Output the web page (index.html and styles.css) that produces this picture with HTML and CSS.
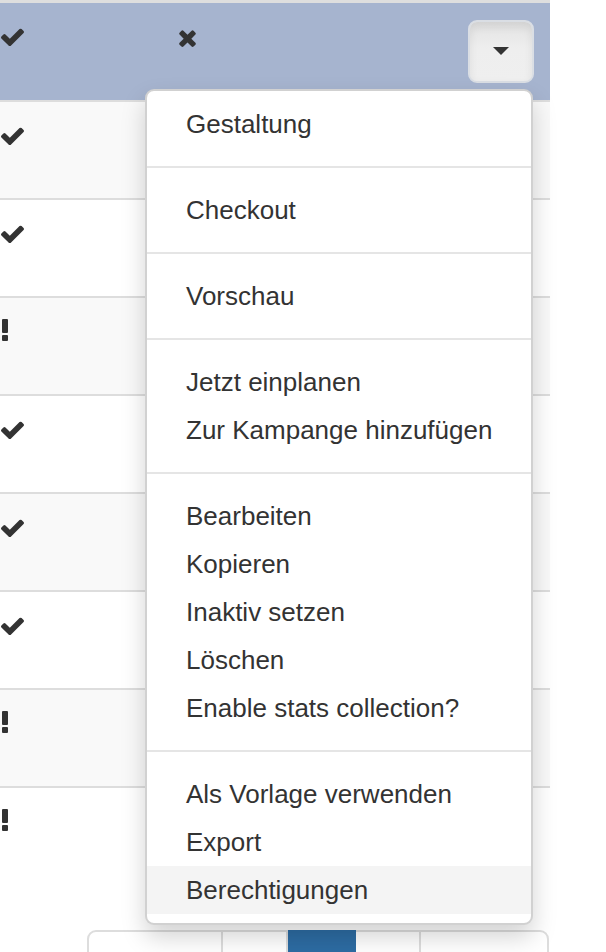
FILE: index.html
```html
<!DOCTYPE html>
<html lang="de">
<head>
<meta charset="utf-8">
<title>Liste</title>
<link rel="stylesheet" href="styles.css">
</head>
<body>
<div class="page">
  <div class="table">
    <div class="row head">
      <div class="cell first">
        <svg class="ic-check" viewBox="121 300 1550 1192"><path d="M1671 566q0 40-28 68l-724 724-136 136q-28 28-68 28t-68-28l-136-136-362-362q-28-28-28-68t28-68l136-136q28-28 68-28t68 28l294 295 656-657q28-28 68-28t68 28l136 136q28 28 28 68z"/></svg>
      </div>
      <div class="cell second">
        <svg class="ic-times" viewBox="110 270 1188 1284"><path d="M1298 1322q0 40-28 68l-136 136q-28 28-68 28t-68-28l-294-294-294 294q-28 28-68 28t-68-28l-136-136q-28-28-28-68t28-68l294-294-294-294q-28-28-28-68t28-68l136-136q28-28 68-28t68 28l294 294 294-294q28-28 68-28t68 28l136 136q28 28 28 68t-28 68l-294 294 294 294q28 28 28 68z"/></svg>
      </div>
      <button class="toggle" type="button"><span class="caret"></span></button>
    </div>
    <div class="row odd"><div class="cell first"><svg class="ic-check" viewBox="121 300 1550 1192"><path d="M1671 566q0 40-28 68l-724 724-136 136q-28 28-68 28t-68-28l-136-136-362-362q-28-28-28-68t28-68l136-136q28-28 68-28t68 28l294 295 656-657q28-28 68-28t68 28l136 136q28 28 28 68z"/></svg></div></div>
    <div class="row"><div class="cell first"><svg class="ic-check" viewBox="121 300 1550 1192"><path d="M1671 566q0 40-28 68l-724 724-136 136q-28 28-68 28t-68-28l-136-136-362-362q-28-28-28-68t28-68l136-136q28-28 68-28t68 28l294 295 656-657q28-28 68-28t68 28l136 136q28 28 28 68z"/></svg></div></div>
    <div class="row odd"><div class="cell first"><svg class="ic-excl" viewBox="0 0 6 22"><rect x="0" y="0" width="6" height="14" rx="1"/><rect x="0" y="16" width="6" height="6" rx="1"/></svg></div></div>
    <div class="row"><div class="cell first"><svg class="ic-check" viewBox="121 300 1550 1192"><path d="M1671 566q0 40-28 68l-724 724-136 136q-28 28-68 28t-68-28l-136-136-362-362q-28-28-28-68t28-68l136-136q28-28 68-28t68 28l294 295 656-657q28-28 68-28t68 28l136 136q28 28 28 68z"/></svg></div></div>
    <div class="row odd"><div class="cell first"><svg class="ic-check" viewBox="121 300 1550 1192"><path d="M1671 566q0 40-28 68l-724 724-136 136q-28 28-68 28t-68-28l-136-136-362-362q-28-28-28-68t28-68l136-136q28-28 68-28t68 28l294 295 656-657q28-28 68-28t68 28l136 136q28 28 28 68z"/></svg></div></div>
    <div class="row"><div class="cell first"><svg class="ic-check" viewBox="121 300 1550 1192"><path d="M1671 566q0 40-28 68l-724 724-136 136q-28 28-68 28t-68-28l-136-136-362-362q-28-28-28-68t28-68l136-136q28-28 68-28t68 28l294 295 656-657q28-28 68-28t68 28l136 136q28 28 28 68z"/></svg></div></div>
    <div class="row odd"><div class="cell first"><svg class="ic-excl" viewBox="0 0 6 22"><rect x="0" y="0" width="6" height="14" rx="1"/><rect x="0" y="16" width="6" height="6" rx="1"/></svg></div></div>
    <div class="row"><div class="cell first"><svg class="ic-excl" viewBox="0 0 6 22"><rect x="0" y="0" width="6" height="14" rx="1"/><rect x="0" y="16" width="6" height="6" rx="1"/></svg></div></div>
  </div>

  <ul class="pagination">
    <li class="pg pg-wide"></li>
    <li class="pg pg-a"></li>
    <li class="pg pg-active"></li>
    <li class="pg pg-b"></li>
    <li class="pg pg-last"></li>
  </ul>

  <ul class="menu">
    <li class="item">Gestaltung</li>
    <li class="divider"></li>
    <li class="item">Checkout</li>
    <li class="divider"></li>
    <li class="item">Vorschau</li>
    <li class="divider"></li>
    <li class="item">Jetzt einplanen</li>
    <li class="item">Zur Kampange hinzufügen</li>
    <li class="divider"></li>
    <li class="item">Bearbeiten</li>
    <li class="item">Kopieren</li>
    <li class="item">Inaktiv setzen</li>
    <li class="item">Löschen</li>
    <li class="item">Enable stats collection?</li>
    <li class="divider"></li>
    <li class="item">Als Vorlage verwenden</li>
    <li class="item">Export</li>
    <li class="item active">Berechtigungen</li>
  </ul>
</div>
</body>
</html>
```

FILE: styles.css
```css
html, body {
  margin: 0;
  padding: 0;
  background: #fff;
}

body {
  font-family: "Liberation Sans", Arial, sans-serif;
  color: #333;
  overflow: hidden;
}

.page {
  position: relative;
  width: 606px;
  height: 952px;
  overflow: hidden;
}

.table {
  width: 550px;
  border-top: 3px solid #dedede;
}

.row {
  display: flex;
  align-items: flex-start;
  height: 96px;
  border-top: 2px solid #dddddd;
  background: #fff;
}

.row.odd {
  background: #f9f9f9;
}

.row.head {
  height: 97px;
  border-top: none;
  background: #a6b4cf;
}

.cell {
  padding-top: 25px;
}

.cell.first {
  width: 178px;
  padding-left: 1px;
}

.cell.second {
  flex: 1;
  padding-top: 26px;
}

.ic-check {
  display: block;
  width: 23px;
  height: 18px;
  fill: #333;
}

.ic-times {
  display: block;
  width: 17px;
  height: 18px;
  fill: #333;
}

.ic-excl {
  display: block;
  width: 6px;
  height: 22px;
  margin: -4px 0 0 1px;
  fill: #333;
}

.toggle {
  box-sizing: border-box;
  width: 66px;
  height: 63px;
  margin: 17px 16px 0 0;
  padding: 0;
  border: 2px solid #dadee4;
  border-radius: 9px;
  background: linear-gradient(#e3e3e3, #eeeeee 45%, #efefef);
  box-shadow: inset 0 5px 8px rgba(0, 0, 0, 0.08);
  display: flex;
  align-items: center;
  justify-content: center;
}

.caret {
  display: block;
  width: 0;
  height: 0;
  border-top: 8px solid #333;
  border-left: 8px solid transparent;
  border-right: 8px solid transparent;
  margin-top: -1px;
}

.pagination {
  list-style: none;
  display: flex;
  margin: 46px 0 0 87px;
  padding: 0;
  width: 462px;
  height: 80px;
}

.pg {
  box-sizing: border-box;
  height: 80px;
  border: 2px solid #dddddd;
  border-left-width: 0;
  background: #fff;
}

.pg-wide {
  width: 136px;
  border-left-width: 2px;
  border-radius: 9px 0 0 9px;
}

.pg-a {
  width: 65px;
}

.pg-active {
  width: 68px;
  border-color: #2d6ca3;
  background: #2d6ca3;
}

.pg-b {
  width: 65px;
}

.pg-last {
  width: 128px;
  border-radius: 0 9px 9px 0;
}

.menu {
  position: absolute;
  left: 145px;
  top: 89px;
  box-sizing: border-box;
  width: 388px;
  margin: 0;
  padding: 9px 0;
  list-style: none;
  background: #fff;
  border: 2px solid rgba(0, 0, 0, 0.18);
  border-radius: 9px;
  box-shadow: 0 12px 24px rgba(0, 0, 0, 0.175);
  font-size: 26px;
  color: #333;
}

.item {
  height: 48px;
  line-height: 48px;
  padding: 0 39px;
  white-space: nowrap;
}

.item.active {
  background: #f4f4f4;
}

.divider {
  height: 2px;
  margin: 18px 0;
  background: #e5e5e5;
}
```
